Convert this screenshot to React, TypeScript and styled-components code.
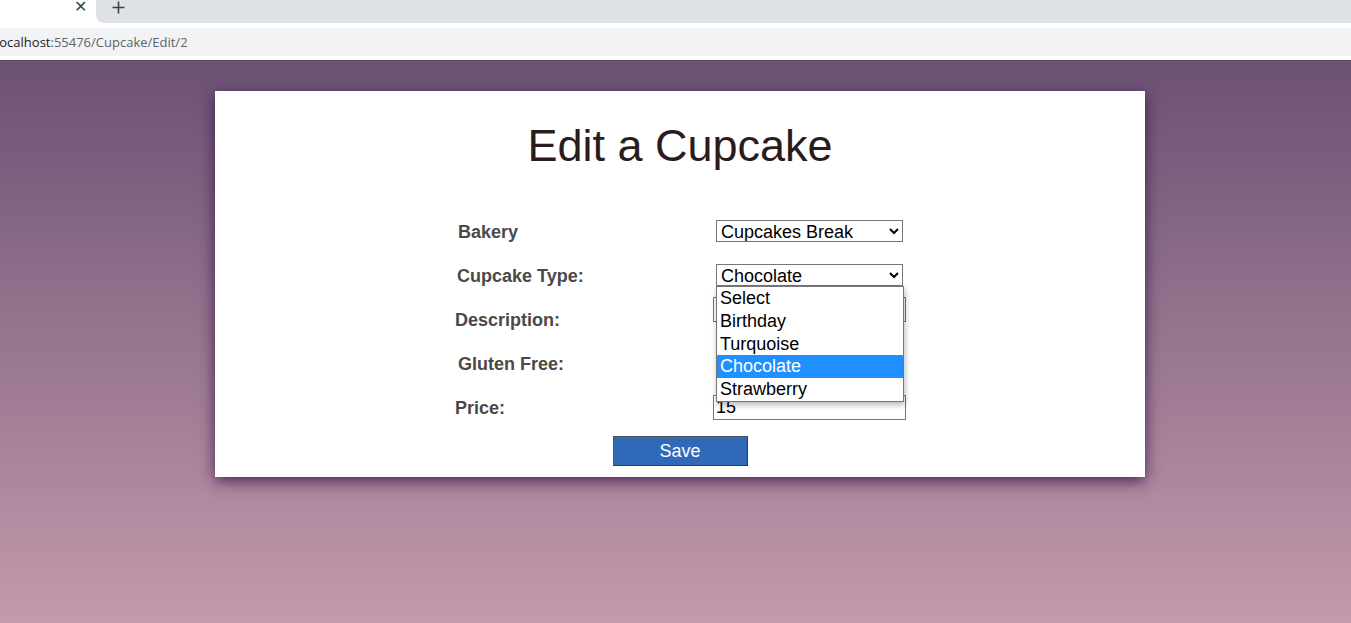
import React from 'react';
import styled, { createGlobalStyle } from 'styled-components';

const GlobalStyle = createGlobalStyle`
  html, body, #root {
    margin: 0;
    height: 100%;
  }
  body {
    font-family: "Liberation Sans", Arial, sans-serif;
    overflow: hidden;
  }
`;

const Frame = styled.div`
  display: flex;
  flex-direction: column;
  height: 100vh;
`;

const TabStrip = styled.div`
  display: flex;
  height: 23px;
  background: #ffffff;
`;

const ActiveTab = styled.div`
  width: 96px;
  display: flex;
  justify-content: flex-end;
  align-items: center;
  padding-right: 9px;
  box-sizing: border-box;
  background: #ffffff;
  color: #3c4043;
  font-size: 16px;
  line-height: 1;
  padding-bottom: 9px;
`;

const TabRest = styled.div`
  flex: 1;
  background: #dee1e6;
  border-bottom-left-radius: 8px;
  display: flex;
  align-items: center;
  padding-left: 16px;
  padding-bottom: 8px;
  color: #3c4043;
`;

const Toolbar = styled.div`
  height: 38px;
  background: #ffffff;
  padding-top: 5px;
  box-sizing: border-box;
  border-bottom: 1px solid #5e4a63;
`;

const AddressField = styled.div`
  height: 28px;
  background: #f1f3f4;
  display: flex;
  align-items: center;
  font-family: "Open Sans", "Liberation Sans", Arial, sans-serif;
  font-size: 13px;
  margin-left: -4px;
  white-space: nowrap;
`;

const Host = styled.span`
  color: #202124;
`;

const UrlPath = styled.span`
  color: #5f6368;
`;

const Page = styled.div`
  flex: 1;
  background: linear-gradient(to bottom, #6b5173 0%, #c39aab 100%);
  padding: 30px 0 0 215px;
`;

const Card = styled.div`
  width: 930px;
  background: #ffffff;
  box-shadow: 0 4px 14px rgba(52, 18, 74, 0.85);
  padding-bottom: 11px;
  display: flex;
  flex-direction: column;
  align-items: center;
`;

const Title = styled.h1`
  margin: 29px 0 0;
  font-size: 45px;
  line-height: 52px;
  font-weight: normal;
  color: #2b1b1d;
`;

const Form = styled.div`
  align-self: flex-start;
  margin: 37px 0 0 240px;
  display: grid;
  grid-template-columns: 258px 193px;
  grid-auto-rows: 44px;
  align-items: center;
`;

const Label = styled.label<{ $indent: number }>`
  padding: 2px 0 0 ${({ $indent }) => $indent}px;
  font-size: 18px;
  font-weight: bold;
  color: #4b4848;
`;

const Cell = styled.div<{ $top?: boolean }>`
  position: relative;
  align-self: ${({ $top }) => ($top ? 'start' : 'center')};
  display: flex;
`;

const Select = styled.select`
  margin-left: 3px;
  width: 187px;
  height: 22px;
  font-family: "Liberation Sans", Arial, sans-serif;
  font-size: 18px;
  color: #000;
  border: 1px solid #767676;
  border-radius: 0;
  background: #fff;
  padding: 0;
`;

const TextInput = styled.input`
  width: 193px;
  height: 25px;
  box-sizing: border-box;
  font-family: "Liberation Sans", Arial, sans-serif;
  font-size: 18px;
  border: 1px solid #767676;
  border-radius: 0;
  padding: 1px 2px;
  color: #000;
`;

const Check = styled.input`
  margin: 0 0 0 4px;
  width: 13px;
  height: 13px;
`;

const OptionList = styled.ul`
  position: absolute;
  top: 22px;
  left: 3px;
  width: 188px;
  margin: 0;
  padding: 0;
  list-style: none;
  box-sizing: border-box;
  background: #fff;
  border: 1px solid #767676;
  box-shadow: 1px 3px 6px rgba(0, 0, 0, 0.28);
  z-index: 5;
`;

const OptionItem = styled.li<{ $active?: boolean }>`
  height: 22.8px;
  line-height: 22.8px;
  padding-left: 3px;
  font-size: 18px;
  color: ${({ $active }) => ($active ? '#ffffff' : '#000000')};
  background: ${({ $active }) => ($active ? '#1e90ff' : 'transparent')};
`;

const SaveButton = styled.button`
  margin-top: 7px;
  width: 135px;
  height: 30px;
  background: #2f69b8;
  border: 1px solid #3a3a3a;
  border-top-color: #555;
  border-left-color: #555;
  color: #ffffff;
  font-family: "Liberation Sans", Arial, sans-serif;
  font-size: 18px;
  padding: 0;
`;

const cupcakeTypes = ['Select', 'Birthday', 'Turquoise', 'Chocolate', 'Strawberry'];

export default function App() {
  return (
    <Frame>
      <GlobalStyle />
      <TabStrip>
        <ActiveTab>✕</ActiveTab>
        <TabRest>
          <svg width="13" height="13" viewBox="0 0 13 13">
            <path d="M6.5 0.5v12M0.5 6.5h12" stroke="#3c4043" strokeWidth="1.6" />
          </svg>
        </TabRest>
      </TabStrip>
      <Toolbar>
        <AddressField>
          <Host>localhost</Host>
          <UrlPath>:55476/Cupcake/Edit/2</UrlPath>
        </AddressField>
      </Toolbar>
      <Page>
        <Card>
          <Title>Edit a Cupcake</Title>
          <Form>
            <Label $indent={3}>Bakery</Label>
            <Cell>
              <Select defaultValue="Cupcakes Break">
                <option>Cupcakes Break</option>
              </Select>
            </Cell>

            <Label $indent={2}>Cupcake Type:</Label>
            <Cell>
              <Select defaultValue="Chocolate">
                {cupcakeTypes.map(t => (
                  <option key={t}>{t}</option>
                ))}
              </Select>
              <OptionList>
                {cupcakeTypes.map(t => (
                  <OptionItem key={t} $active={t === 'Chocolate'}>
                    {t}
                  </OptionItem>
                ))}
              </OptionList>
            </Cell>

            <Label $indent={0}>Description:</Label>
            <Cell $top>
              <TextInput defaultValue="" />
            </Cell>

            <Label $indent={3}>Gluten Free:</Label>
            <Cell>
              <Check type="checkbox" />
            </Cell>

            <Label $indent={0}>Price:</Label>
            <Cell>
              <TextInput defaultValue="15" />
            </Cell>
          </Form>
          <SaveButton>Save</SaveButton>
        </Card>
      </Page>
    </Frame>
  );
}
